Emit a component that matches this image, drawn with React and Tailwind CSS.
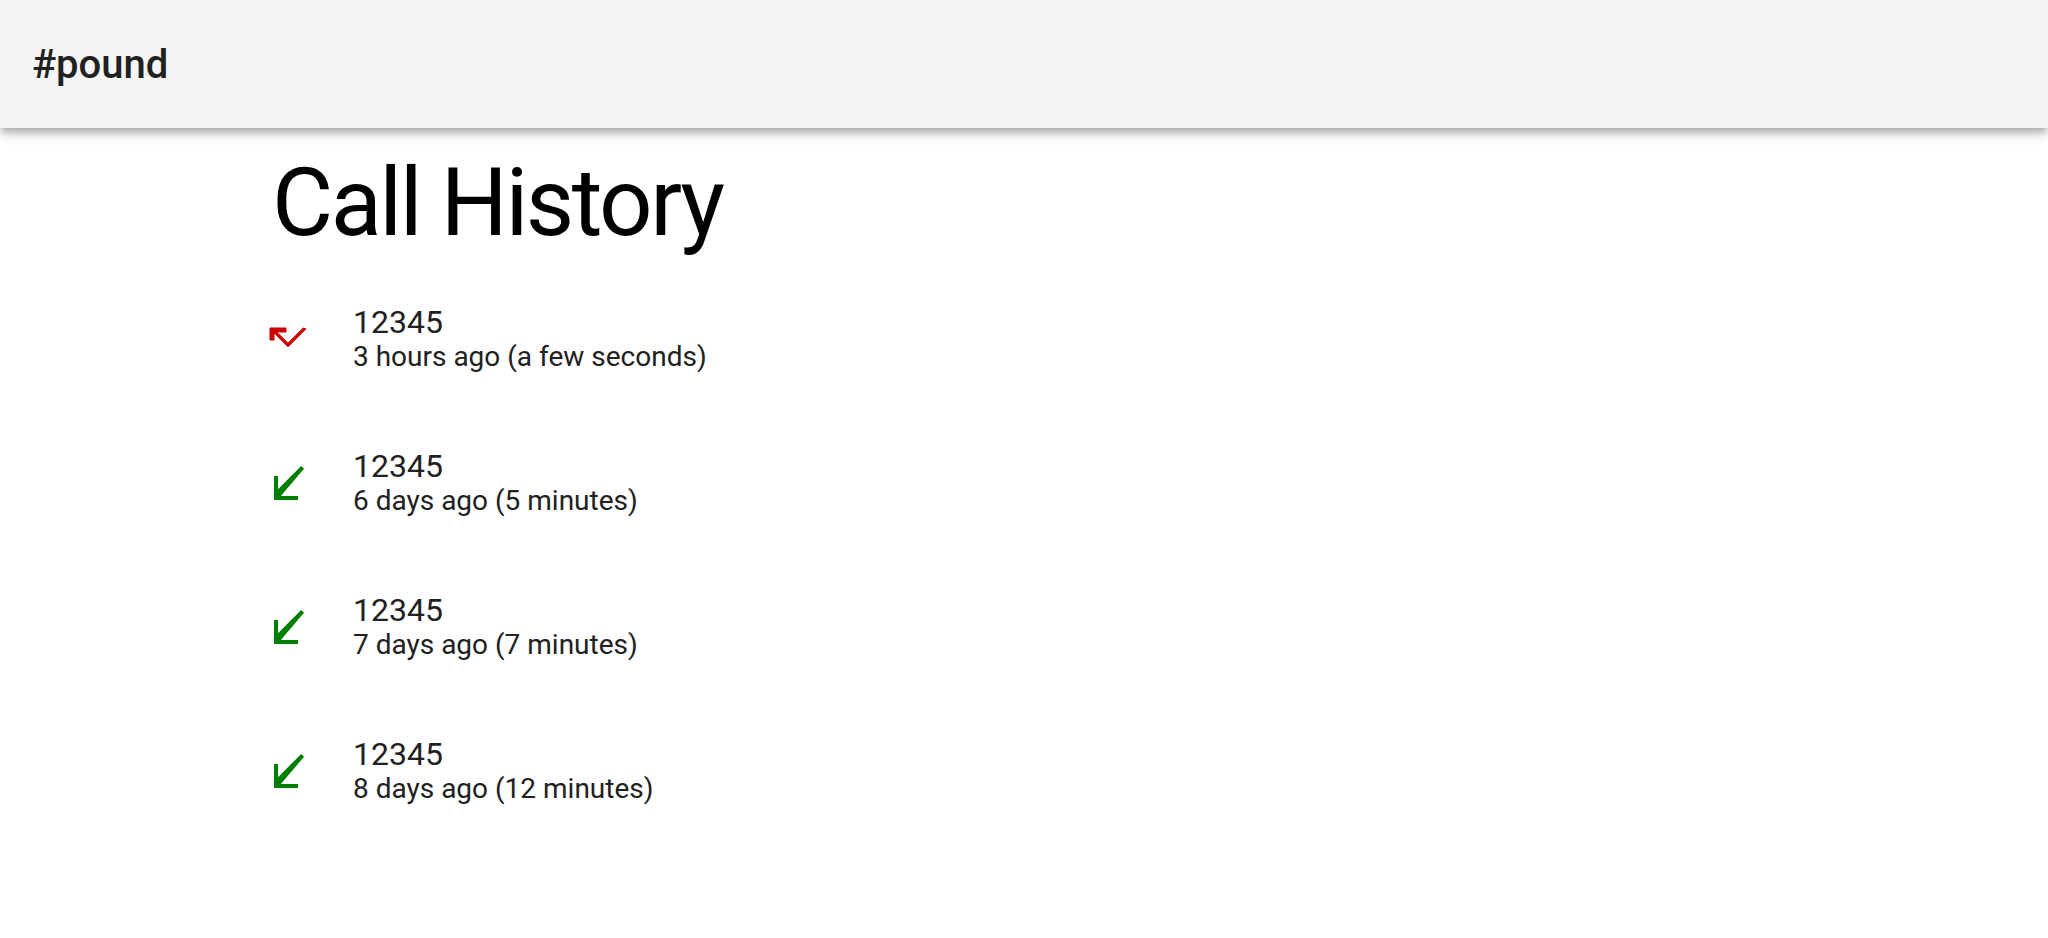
const calls = [
  { number: "12345", when: "3 hours ago", duration: "a few seconds", missed: true },
  { number: "12345", when: "6 days ago", duration: "5 minutes", missed: false },
  { number: "12345", when: "7 days ago", duration: "7 minutes", missed: false },
  { number: "12345", when: "8 days ago", duration: "12 minutes", missed: false },
];

function CallMissedIcon() {
  return (
    <svg viewBox="0 0 24 24" className="w-[48px] h-[48px]" fill="#cc0000" stroke="#cc0000" strokeWidth="0.5">
      <path d="M19.59 7L12 14.59 6.41 9H11V7H3v6h2V9.41l7 7 9-9z" />
    </svg>
  );
}

function CallReceivedIcon() {
  return (
    <svg viewBox="0 0 24 24" className="w-[48px] h-[48px]" fill="#008000">
      <path d="M20 5.41L18.59 4 7 15.59V9H5v12h12v-2H8.41z" />
    </svg>
  );
}

export default function App() {
  return (
    <div className="min-h-screen bg-white font-['Roboto',sans-serif]">
      <header className="h-[128px] bg-[#f5f5f5] px-[32px] flex items-center shadow-[0_4px_8px_-2px_rgba(0,0,0,0.3),0_8px_10px_0_rgba(0,0,0,0.14)] relative z-10">
        <h1 className="text-[40px] font-medium text-[#212121] leading-none mt-[2px]">#pound</h1>
      </header>

      <main className="pl-[264px] pt-[19px]">
        <h2 className="text-[94px] font-normal leading-[112px] tracking-[-2.5px] text-black pl-[8px]">
          Call History
        </h2>

        <ul className="mt-[7px]">
          {calls.map((call, idx) => (
            <li key={idx} className="h-[144px] flex items-center">
              <div className="w-[48px] h-[48px] shrink-0">
                {call.missed ? <CallMissedIcon /> : <CallReceivedIcon />}
              </div>
              <div className="ml-[41px] mt-[6px] flex flex-col text-[#212121]">
                <span className="text-[32px] leading-[32px]">{call.number}</span>
                <span className="text-[28px] leading-[38px]">
                  {call.when} ({call.duration})
                </span>
              </div>
            </li>
          ))}
        </ul>
      </main>
    </div>
  );
}
